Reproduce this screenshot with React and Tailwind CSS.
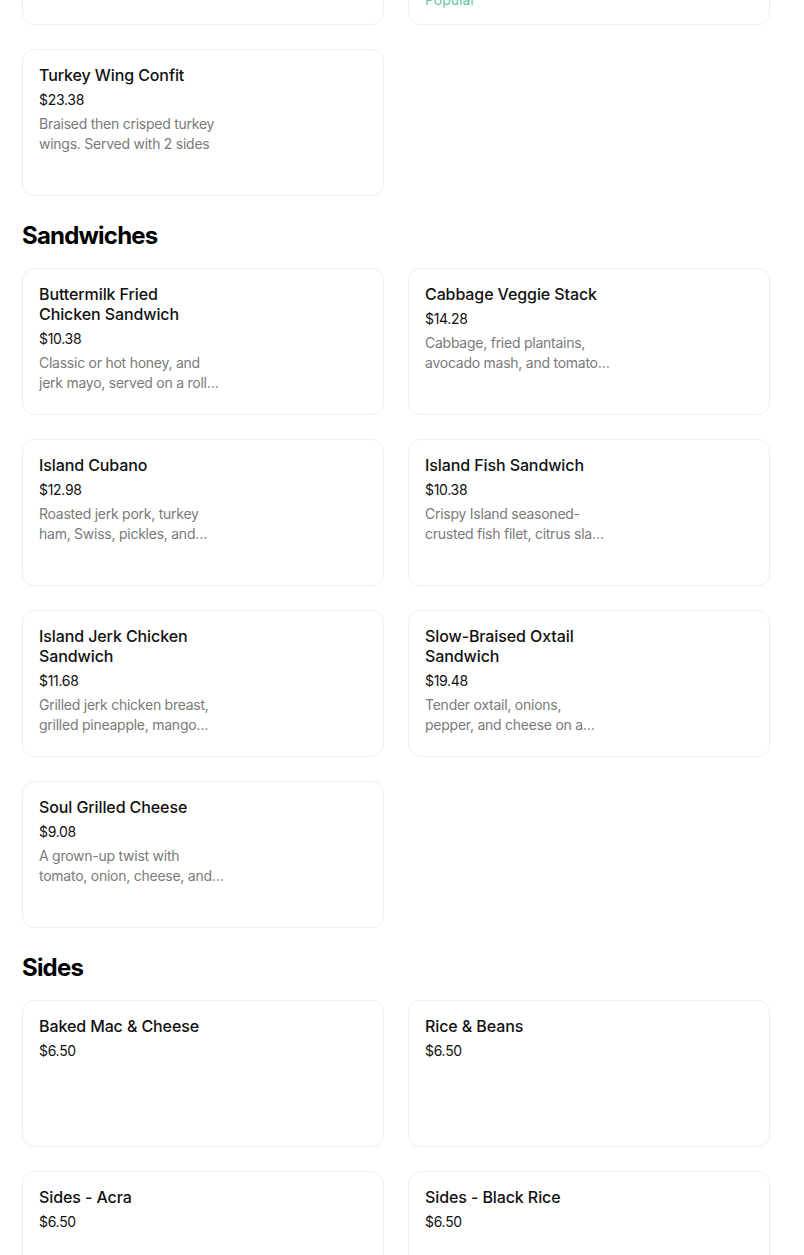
import React from 'react';

// ============================================
// MENU DATA
// ============================================

const sections = [
    {
        title: 'Sandwiches',
        items: [
            { name: 'Buttermilk Fried Chicken Sandwich', price: '$10.38', desc: 'Classic or hot honey, and jerk mayo, served on a roll with pickles and slaw' },
            { name: 'Cabbage Veggie Stack', price: '$14.28', desc: 'Cabbage, fried plantains, avocado mash, and tomato on a toasted bun' },
            { name: 'Island Cubano', price: '$12.98', desc: 'Roasted jerk pork, turkey ham, Swiss, pickles, and mustard on pressed bread' },
            { name: 'Island Fish Sandwich', price: '$10.38', desc: 'Crispy Island seasoned-crusted fish filet, citrus slaw, and tartar' },
            { name: 'Island Jerk Chicken Sandwich', price: '$11.68', desc: 'Grilled jerk chicken breast, grilled pineapple, mango salsa and greens' },
            { name: 'Slow-Braised Oxtail Sandwich', price: '$19.48', desc: 'Tender oxtail, onions, pepper, and cheese on a toasted hoagie roll' },
            { name: 'Soul Grilled Cheese', price: '$9.08', desc: 'A grown-up twist with tomato, onion, cheese, and herbs on sourdough' },
        ],
    },
    {
        title: 'Sides',
        items: [
            { name: 'Baked Mac & Cheese', price: '$6.50' },
            { name: 'Rice & Beans', price: '$6.50' },
            { name: 'Sides - Acra', price: '$6.50' },
            { name: 'Sides - Black Rice', price: '$6.50' },
        ],
    },
];

// ============================================
// CARD
// ============================================

const ItemCard = ({ item }) => (
    <div className="h-[147px] rounded-xl border border-[#efefef] bg-white px-4 pt-[15px] overflow-hidden">
        <div className="w-[188px]">
            <div className="w-[180px] text-[16px] leading-5 font-medium text-[#111] tracking-[-0.1px]">{item.name}</div>
            <div className="mt-[5px] text-[14px] leading-5 text-[#111] tracking-[-0.3px]">{item.price}</div>
            {item.desc && (
                <div className="mt-1 text-[14px] leading-5 text-[#7a7a7a] tracking-[-0.25px] line-clamp-2">{item.desc}</div>
            )}
        </div>
    </div>
);

// cards of the previous section, only their bottom edge is on screen
const TailCard = ({ badge }) => (
    <div className="h-[147px] rounded-xl border border-[#efefef] bg-white px-4 pb-[14px] flex flex-col justify-end">
        {badge && <div className="text-[14px] leading-5 text-[#5fc7a4]">{badge}</div>}
    </div>
);

export default function App() {
    return (
        <div className="min-h-screen bg-white pl-[22px] pr-[34px] overflow-hidden" style={{ fontFamily: 'Inter, "Noto Sans", sans-serif' }}>
            <div className="grid grid-cols-2 gap-6 -mt-[122px]">
                <TailCard />
                <TailCard badge="Popular" />
                <ItemCard item={{ name: 'Turkey Wing Confit', price: '$23.38', desc: 'Braised then crisped turkey wings. Served with 2 sides' }} />
            </div>

            {sections.map(section => (
                <div key={section.title}>
                    <h2 className="mt-6 mb-4 h-8 text-[24px] leading-8 font-bold text-black tracking-[-0.8px]">{section.title}</h2>
                    <div className="grid grid-cols-2 gap-6">
                        {section.items.map(item => (
                            <ItemCard key={item.name} item={item} />
                        ))}
                    </div>
                </div>
            ))}
        </div>
    );
}
